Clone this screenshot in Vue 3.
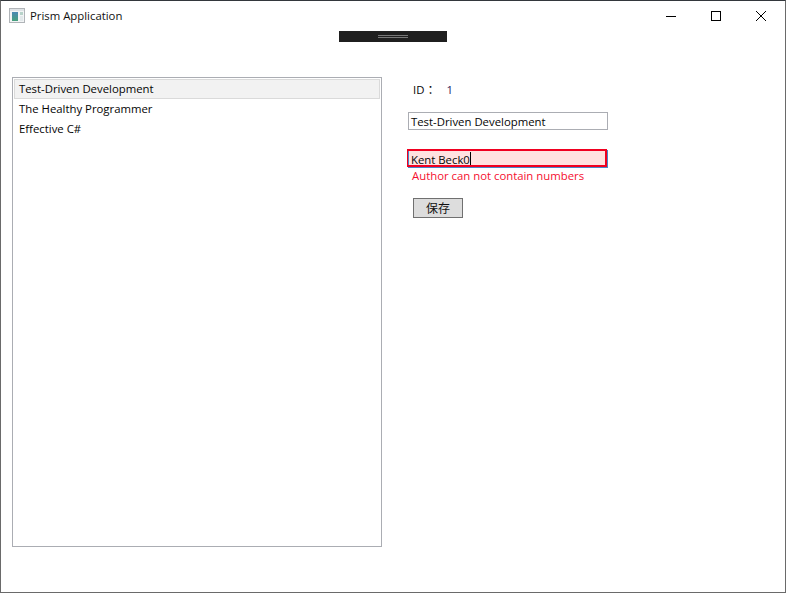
<script setup>
const books = ['Test-Driven Development', 'The Healthy Programmer', 'Effective C#']
</script>

<template>
  <div class="window">
    <header class="titlebar">
      <div class="title">
        <svg class="app-icon" width="16" height="16" viewBox="0 0 16 16">
          <defs>
            <linearGradient id="pane" x1="0" y1="0" x2="0" y2="1">
              <stop offset="0" stop-color="#4a88b4" />
              <stop offset="1" stop-color="#46a07c" />
            </linearGradient>
          </defs>
          <rect x="0.5" y="0.5" width="15" height="14" fill="#f2f4f5" stroke="#b0b4b8" />
          <rect x="1" y="1" width="14" height="2" fill="#dfe3e6" />
          <rect x="3" y="4" width="6" height="9" fill="url(#pane)" />
          <rect x="11" y="4" width="3" height="3" fill="#b7d2c9" />
          <rect x="11" y="8" width="3" height="5" fill="#e2e8ea" />
        </svg>
        <span>Prism Application</span>
      </div>
      <div class="controls">
        <div class="ctl">
          <svg width="12" height="12" viewBox="0 0 12 12"><path d="M1 6.5H11" stroke="#000" fill="none" /></svg>
        </div>
        <div class="ctl">
          <svg width="12" height="12" viewBox="0 0 12 12"><rect x="1.5" y="1.5" width="9" height="9" stroke="#000" fill="none" /></svg>
        </div>
        <div class="ctl">
          <svg width="12" height="12" viewBox="0 0 12 12"><path d="M1 1L11 11M11 1L1 11" stroke="#000" fill="none" /></svg>
        </div>
      </div>
    </header>

    <div class="adorner-row">
      <div class="adorner"><span class="grip"></span></div>
    </div>

    <main class="content">
      <ul class="list">
        <li v-for="(b, i) in books" :key="b" :class="{ selected: i === 0 }">{{ b }}</li>
      </ul>
      <section class="form">
        <div class="id-row"><span>ID</span><span class="colon">：</span><span class="id-value">1</span></div>
        <div class="textbox">Test-Driven Development</div>
        <div class="textbox invalid">Kent Beck0<span class="caret"></span></div>
        <div class="error">Author can not contain numbers</div>
        <button class="save">保存</button>
      </section>
    </main>
  </div>
</template>

<style scoped>
.window {
  width: 786px;
  height: 593px;
  box-sizing: border-box;
  background: #fff;
  border: 1px solid #6a6a6a;
  border-top-color: #33373c;
  display: flex;
  flex-direction: column;
  font-family: "Open Sans", "Noto Sans CJK SC", sans-serif;
  font-size: 11.35px;
  color: #050505;
  overflow: hidden;
}
.titlebar {
  height: 29px;
  flex: none;
  display: flex;
  justify-content: space-between;
  align-items: flex-start;
}
.title {
  display: flex;
  align-items: center;
  gap: 5px;
  height: 29px;
  padding-left: 8px;
  color: #111;
}
.app-icon {
  flex: none;
}
.controls {
  display: flex;
  margin-right: 2px;
}
.ctl {
  width: 45px;
  height: 29px;
  display: flex;
  align-items: center;
  justify-content: center;
}
.adorner-row {
  flex: none;
  height: 11px;
  margin-top: 1px;
  display: flex;
  justify-content: center;
}
.adorner {
  width: 108px;
  height: 11px;
  background: #1f1f1f;
  display: flex;
  align-items: center;
  justify-content: center;
}
.grip {
  display: block;
  width: 30px;
  height: 3px;
  box-sizing: border-box;
  border-top: 1px solid #777;
  border-bottom: 1px solid #777;
}
.content {
  flex: 1;
  display: flex;
  padding: 35px 0 0 11px;
  min-height: 0;
}
.list {
  list-style: none;
  margin: 0;
  padding: 1px;
  width: 370px;
  height: 470px;
  box-sizing: border-box;
  border: 1px solid #abadb3;
  flex: none;
}
.list li {
  height: 20px;
  line-height: 17px;
  padding-left: 4px;
  border: 1px solid transparent;
  box-sizing: border-box;
  white-space: nowrap;
}
.list li.selected {
  background: #f2f2f2;
  border-color: #dadada;
}
.form {
  margin-left: 26px;
  width: 200px;
  display: flex;
  flex-direction: column;
  align-items: flex-start;
}
.id-row {
  display: flex;
  height: 16px;
  line-height: 16px;
  margin: 5px 0 0 5px;
}
.colon {
  font-size: 12px;
  margin-left: 3px;
}
.id-value {
  margin-left: 7px;
  color: #2a1a5e;
}
.textbox {
  position: relative;
  width: 200px;
  height: 18px;
  box-sizing: border-box;
  border: 1px solid #abadb3;
  line-height: 18px;
  padding-left: 2px;
  margin-top: 14px;
  white-space: nowrap;
}
.textbox.invalid {
  margin-top: 20px;
  border: 1px solid #4a86c8;
  background: #ffe2e0;
  display: flex;
  align-items: flex-start;
}
.textbox.invalid::after {
  content: "";
  position: absolute;
  top: -2px;
  left: -2px;
  right: 0;
  bottom: 0;
  border: 2px solid #f00020;
  border-left-width: 1px;
}
.caret {
  display: inline-block;
  width: 1px;
  height: 15px;
  margin-top: 1px;
  background: #000;
}
.error {
  margin: 0 0 0 4px;
  color: #f50f2f;
  line-height: 16px;
  height: 16px;
  white-space: nowrap;
}
.save {
  margin: 14px 0 0 5px;
  width: 50px;
  height: 20px;
  padding: 0;
  background: #dddddd;
  border: 1px solid #707070;
  font-family: "Noto Sans CJK SC", sans-serif;
  font-size: 12px;
  line-height: 16px;
  color: #111;
}
</style>

<style>
body {
  background: #fff;
}
</style>
